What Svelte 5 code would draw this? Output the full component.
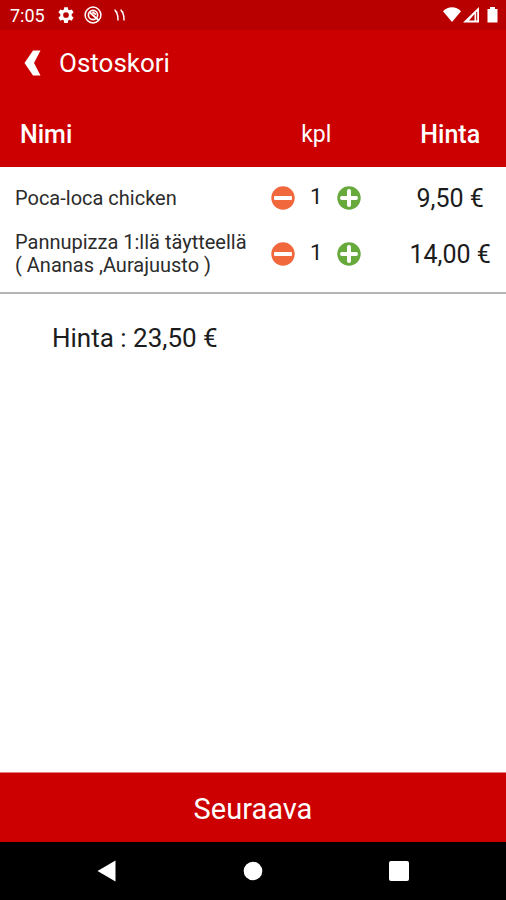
<script>
  let items = $state([
    { name: 'Poca-loca chicken', extras: '', count: 1, price: 9.5 },
    { name: 'Pannupizza 1:llä täytteellä', extras: '( Ananas ,Aurajuusto )', count: 1, price: 14 }
  ]);
  const total = $derived(items.reduce((sum, item) => sum + item.count * item.price, 0));
  const euros = (value) => value.toFixed(2).replace('.', ',') + ' €';
</script>

<div class="screen">
  <div class="status">
    <span class="clock">7:05</span>
    <svg class="gear" width="18" height="18" viewBox="0 0 24 24" aria-hidden="true">
      <path fill="#fff" fill-rule="evenodd" d="M9.6 1.5h4.8l.5 3.2 1.8 1 3-1.2 2.4 4.1-2.5 2v2.8l2.5 2-2.4 4.1-3-1.2-1.8 1-.5 3.2H9.6l-.5-3.2-1.8-1-3 1.2-2.4-4.1 2.5-2v-2.8l-2.5-2 2.4-4.1 3 1.2 1.8-1zM12 8.2a3.8 3.8 0 1 0 0 7.6 3.8 3.8 0 0 0 0-7.6z" />
    </svg>
    <svg class="ring" width="18" height="18" viewBox="0 0 18 18" fill="none" stroke="#fff" aria-hidden="true">
      <circle cx="9" cy="9" r="7.9" stroke-width="1.5" />
      <circle cx="9" cy="9" r="4.600" stroke-width="1.700" />
      <path stroke-width="1.800" d="M6 6.500l6 5.500M8.500 6l3.500 2.500M12 12l2.500 2" />
    </svg>
    <svg class="ticks" width="12" height="14" viewBox="0 0 12 14" fill="none" stroke="#fff" stroke-width="1.500" aria-hidden="true">
      <path d="M1 1.500c.3 2 1 2.600 2.300 2.300M2 3.500c1.500 2 2 5 2 9M7 1.500c.3 2 1 2.600 2.300 2.300M8 3.500c1.500 2 2 5 2 9" />
    </svg>
    <span class="fill"></span>
    <svg width="55" height="18" viewBox="0 0 55 18" fill="#fff" aria-hidden="true">
      <path d="M0 5.200C5 0 13 0 18 5.200L9 16z" />
      <path fill-rule="evenodd" d="M36 1v15.500H20zM31.500 8l-5.500 6.500h5.500zM33.200 6v8.500h1V6z" />
      <path d="M47 1h5v2h2.500v13.500h-10V3H47z" />
    </svg>
  </div>

  <header>
    <button class="back" aria-label="Takaisin">
      <svg width="17" height="26" viewBox="0 0 17 26" aria-hidden="true">
        <path fill="#fff" d="M9 .5h7.500L10 13l6.500 12.500H9L.5 13z" />
      </svg>
    </button>
    <h1>Ostoskori</h1>
  </header>

  <main>
    <table>
      <thead>
        <tr><th class="name">Nimi</th><th class="qty">kpl</th><th class="price">Hinta</th></tr>
      </thead>
      <tbody>
        {#each items as item}
          <tr>
            <td class="name">
              {item.name}
              {#if item.extras}<br />{item.extras}{/if}
            </td>
            <td class="qty">
              <div class="stepper">
                <button aria-label="Vähennä" onclick={() => (item.count = Math.max(0, item.count - 1))}>
                  <svg width="24" height="24" viewBox="0 0 24 24" aria-hidden="true">
                    <circle cx="12" cy="12" r="11.700" fill="#f0683c" />
                    <rect x="3" y="10" width="18" height="4" rx="1" fill="#fff" />
                  </svg>
                </button>
                <span>{item.count}</span>
                <button aria-label="Lisää" onclick={() => (item.count += 1)}>
                  <svg width="24" height="24" viewBox="0 0 24 24" aria-hidden="true">
                    <circle cx="12" cy="12" r="11.700" fill="#68a93c" />
                    <path d="M12 5v14M5 12h14" stroke="#fff" stroke-width="4" stroke-linecap="round" />
                  </svg>
                </button>
              </div>
            </td>
            <td class="price">{euros(item.price)}</td>
          </tr>
        {/each}
      </tbody>
    </table>
    <p class="total">Hinta : {euros(total)}</p>
  </main>

  <button class="next">Seuraava</button>

  <nav>
    <button aria-label="Back">
      <svg width="20" height="22" viewBox="0 0 20 22" aria-hidden="true"><path fill="#fff" d="M18.500.5v21L.5 11z" /></svg>
    </button>
    <button aria-label="Home">
      <svg width="20" height="20" viewBox="0 0 20 20" aria-hidden="true"><circle cx="10" cy="10" r="9.300" fill="#fff" /></svg>
    </button>
    <button aria-label="Recents">
      <svg width="20" height="20" viewBox="0 0 20 20" aria-hidden="true"><rect width="20" height="20" rx="2" fill="#fff" /></svg>
    </button>
  </nav>
</div>

<style>
  :global(body) {
    margin: 0;
  }
  .screen {
    min-height: 100vh;
    display: flex;
    flex-direction: column;
    background: #fff;
    color: #1c1c1c;
    font-family: Roboto, sans-serif;
  }
  button {
    border: 0;
    padding: 0;
    background: none;
    color: inherit;
    font: inherit;
    display: flex;
    align-items: center;
    justify-content: center;
    cursor: pointer;
  }
  svg {
    display: block;
  }
  .status {
    display: flex;
    align-items: center;
    height: 30px;
    padding: 0 8px 0 10px;
    background: #b90000;
    color: #fff;
    font-size: 18px;
  }
  .gear {
    margin-left: 12px;
  }
  .ring {
    margin-left: 9px;
  }
  .ticks {
    margin-left: 12px;
  }
  .fill {
    flex: 1;
  }
  header {
    display: flex;
    align-items: center;
    height: 66px;
    padding-left: 24px;
    background: #cc0000;
    color: #fff;
  }
  h1 {
    margin: 0 0 0 18px;
    font-size: 26px;
    font-weight: 400;
  }
  main {
    flex: 1;
  }
  table {
    width: 100%;
    border-collapse: collapse;
    table-layout: fixed;
    border-bottom: 2px solid #b4b4b4;
  }
  th {
    height: 66px;
    padding: 5px 0 0;
    background: #cc0000;
    color: #fff;
    font-size: 25px;
    font-weight: 500;
    vertical-align: middle;
  }
  th.name {
    width: 51%;
    padding-left: 20px;
    box-sizing: border-box;
    text-align: left;
  }
  th.qty {
    width: 23%;
    font-size: 23px;
    font-weight: 400;
  }
  td {
    height: 56px;
    padding: 0;
  }
  tbody tr:first-child td {
    padding-top: 3px;
  }
  tbody tr:last-child td {
    padding-bottom: 10px;
  }
  td.name {
    padding-left: 15px;
    color: #2c2c2c;
    font-size: 20px;
    line-height: 23px;
  }
  th.price,
  td.price {
    padding-left: 20px;
    text-align: center;
  }
  td.price {
    font-size: 25px;
  }
  .stepper {
    display: flex;
    justify-content: center;
    align-items: center;
    gap: 15px;
  }
  .stepper span {
    font-size: 22px;
    line-height: 22px;
    padding-bottom: 2px;
  }
  .total {
    margin: 0;
    padding: 28px 52px;
    font-size: 26px;
    line-height: 32px;
  }
  .next {
    height: 70px;
    padding-top: 2px;
    border-top: 1px solid #e08080;
    background: #cc0000;
    color: #fff;
    font-size: 29px;
  }
  nav {
    display: flex;
    justify-content: space-around;
    align-items: center;
    height: 58px;
    padding: 0 34px;
    background: #000;
  }
  nav button {
    width: 48px;
    height: 48px;
  }
</style>
